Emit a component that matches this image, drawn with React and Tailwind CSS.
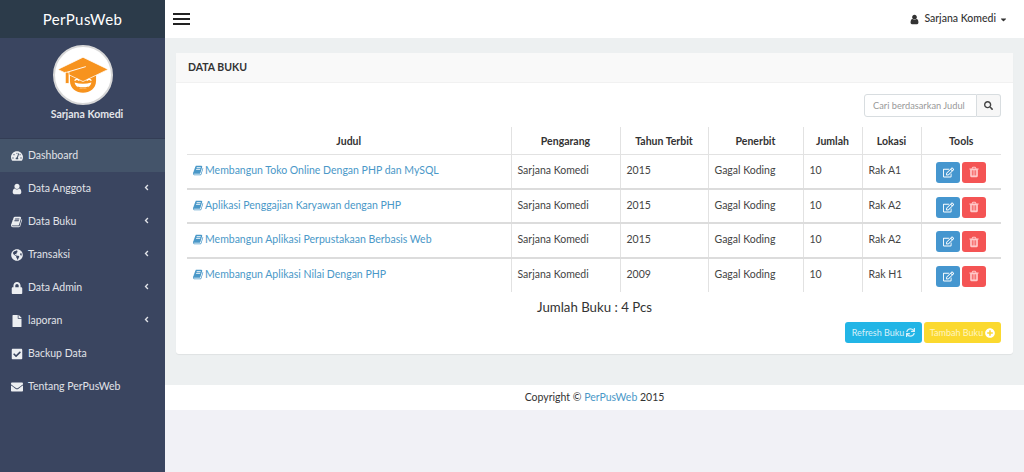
import React from 'react';
import { FaTachometerAlt, FaGlobeAmericas, FaLock, FaFile, FaCheckSquare, FaEnvelope, FaAngleLeft, FaSearch, FaRegEdit, FaSync, FaPlusCircle, FaCaretDown } from 'react-icons/fa';

// font awesome 4 shapes, the v5 set in react-icons draws these differently
function BookIcon({ className }) {
  return (
    <svg viewBox="0 0 1792 1792" fill="currentColor" className={className}>
      <path d="M1639 478q40 57 18 129l-275 906q-19 64-76.500 107.500t-122.500 43.500h-923q-77 0-148.500-53.500t-99.500-131.500q-24-67-2-127 0-4 3-27t4-37q1-8-3-21.500t-3-19.500q2-11 8-21t16.500-23.500 16.500-23.500q23-38 45-91.500t30-91.500q3-10 .5-30t-.5-28q3-11 17-28t17-23q21-36 42-92t25-90q1-9-2.500-32t.5-28q4-13 22-30.500t22-22.500q19-26 42.500-84.500t27.500-96.500q1-8-3-25.500t-2-26.500q2-8 9-18t18-23 17-21q8-12 16.500-30.500t15-35 16-36 19.500-32 26.500-23.500 36-11.500 47.500 5.500l-1 3q38-9 51-9h761q74 0 114 56t18 130l-274 906q-36 119-71.500 153.500t-128.500 34.500h-869q-27 0-38 15-11 16-1 43 24 70 144 70h923q29 0 56-15.500t35-41.500l300-987q7-22 5-57 38 15 59 43zm-1064 2q-4 13 2 22.500t20 9.500h608q13 0 25.500-9.500t16.500-22.500l21-64q4-13-2-22.500t-20-9.500h-608q-13 0-25.500 9.500t-16.500 22.500zm-83 256q-4 13 2 22.500t20 9.500h608q13 0 25.500-9.500t16.500-22.500l21-64q4-13-2-22.500t-20-9.500h-608q-13 0-25.500 9.500t-16.500 22.500z" />
    </svg>
  );
}

function UserIcon({ className }) {
  return (
    <svg viewBox="0 0 1792 1792" fill="currentColor" className={className}>
      <path d="M1536 1399q0 109-62.500 187t-150.500 78h-854q-88 0-150.500-78t-62.500-187q0-85 8.500-160.500t31.500-152 58.500-131 94-89 134.500-34.500q131 128 313 128t313-128q76 0 134.500 34.500t94 89 58.500 131 31.500 152 8.500 160.500zm-256-887q0 159-112.500 271.500t-271.500 112.500-271.500-112.500-112.500-271.500 112.500-271.500 271.500-112.500 271.500 112.500 112.500 271.500z" />
    </svg>
  );
}

function TrashIcon({ className }) {
  return (
    <svg viewBox="0 0 1792 1792" fill="currentColor" className={className}>
      <path d="M704 1376v-704q0-14-9-23t-23-9h-64q-14 0-23 9t-9 23v704q0 14 9 23t23 9h64q14 0 23-9t9-23zm256 0v-704q0-14-9-23t-23-9h-64q-14 0-23 9t-9 23v704q0 14 9 23t23 9h64q14 0 23-9t9-23zm256 0v-704q0-14-9-23t-23-9h-64q-14 0-23 9t-9 23v704q0 14 9 23t23 9h64q14 0 23-9t9-23zm-544-992h448l-48-117q-7-9-17-11h-317q-10 2-17 11zm928 32v64q0 14-9 23t-23 9h-96v948q0 83-47 143.500t-113 60.500h-832q-66 0-113-58.500t-47-141.500v-952h-96q-14 0-23-9t-9-23v-64q0-14 9-23t23-9h309l70-167q15-37 54-63t79-26h320q40 0 79 26t54 63l70 167h309q14 0 23 9t9 23z" />
    </svg>
  );
}

const menu = [
  { label: 'Dashboard', icon: FaTachometerAlt, active: true },
  { label: 'Data Anggota', icon: UserIcon, arrow: true },
  { label: 'Data Buku', icon: BookIcon, arrow: true },
  { label: 'Transaksi', icon: FaGlobeAmericas, arrow: true },
  { label: 'Data Admin', icon: FaLock, arrow: true },
  { label: 'laporan', icon: FaFile, arrow: true },
  { label: 'Backup Data', icon: FaCheckSquare },
  { label: 'Tentang PerPusWeb', icon: FaEnvelope },
];

const books = [
  { judul: 'Membangun Toko Online Dengan PHP dan MySQL', tahun: '2015', lokasi: 'Rak A1' },
  { judul: 'Aplikasi Penggajian Karyawan dengan PHP', tahun: '2015', lokasi: 'Rak A2' },
  { judul: 'Membangun Aplikasi Perpustakaan Berbasis Web', tahun: '2015', lokasi: 'Rak A2' },
  { judul: 'Membangun Aplikasi Nilai Dengan PHP', tahun: '2009', lokasi: 'Rak H1' },
];

function Avatar() {
  return (
    <div className="w-[60px] h-[60px] rounded-full bg-white border-2 border-[#d8d8d8]">
      <svg viewBox="0 0 60 60" className="w-full h-full">
        <path d="M16 28 H44 V36 C44 45 37 49 30 49 C23 49 16 45 16 36 Z" fill="#f7931e" />
        <path d="M3 24 L30 11 L57 24 L30 37 Z" fill="#f7931e" stroke="#fff" strokeWidth="0.8" />
        <path d="M13 27 L33 21" stroke="#fff" strokeWidth="1" fill="none" />
        <rect x="11" y="27" width="4" height="12" fill="#f7931e" stroke="#fff" strokeWidth="0.8" />
        <path d="M21 38 C23 47 37 47 39 38 Q30 41 21 38 Z" fill="#fff" />
        <path d="M24 43 Q30 45 36 43" stroke="#f7931e" strokeWidth="1.500" fill="none" />
        <path d="M21 36 q2.500 -3 5 0 M34 36 q2.500 -3 5 0" stroke="#fff" strokeWidth="1.500" fill="none" />
      </svg>
    </div>
  );
}

function Sidebar() {
  return (
    <aside className="w-[165px] shrink-0 bg-[#3a4560] min-h-screen">
      <div className="h-[38px] bg-[#2c3b4a] flex items-center justify-center text-white text-[15px] tracking-[0.4px]">PerPusWeb</div>
      <div className="h-[101px] flex flex-col items-center pt-[7px] border-b border-[#333d55]">
        <Avatar />
        <div className="pl-[9px] text-[10.5px] leading-[18px] font-bold text-[#e4e6ea]">Sarjana Komedi</div>
      </div>
      <nav>
        {menu.map((m) => (
          <div key={m.label} className={`h-[33px] flex items-center pl-[11px] pr-[14px] text-[10.5px] text-[#e1e3e8] ${m.active ? 'bg-[#44546a]' : ''}`}>
            <m.icon className="w-[12px] h-[12px] text-[#eceef1] mr-[5px] shrink-0" />
            <span>{m.label}</span>
            {m.arrow && <FaAngleLeft className="ml-auto w-[9px] h-[9px] mb-[3px]" />}
          </div>
        ))}
      </nav>
    </aside>
  );
}

function Topbar() {
  return (
    <header className="h-[38px] bg-white flex items-center justify-between pl-[8px] pr-[16px] text-[#333]">
      <div className="w-[17px] flex flex-col gap-[3px]">
        <span className="h-[2px] bg-[#222]" />
        <span className="h-[2px] bg-[#222]" />
        <span className="h-[2px] bg-[#222]" />
      </div>
      <div className="flex items-center text-[10.5px] font-medium">
        <UserIcon className="w-[11px] h-[11px] mr-[4px]" />
        <span>Sarjana Komedi</span>
        <FaCaretDown className="w-[9px] h-[9px] ml-[3px]" />
      </div>
    </header>
  );
}

function BookTable() {
  const th = 'border-l border-[#e2e2e2] pt-[3px] font-bold text-center text-[10.5px] text-[#333] border-b';
  const td = 'border-l border-[#e2e2e2] pl-[6px] align-top pt-[8px] text-[10.5px] text-[#444]';
  return (
    <table className="w-[814px] table-fixed border-collapse">
      <colgroup>
        <col className="w-[324px]" />
        <col className="w-[109px]" />
        <col className="w-[88px]" />
        <col className="w-[95px]" />
        <col className="w-[59px]" />
        <col className="w-[59px]" />
        <col className="w-[80px]" />
      </colgroup>
      <thead>
        <tr className="h-[27px]">
          <th className="pt-[3px] font-bold text-center text-[10.5px] text-[#333] border-b border-[#e2e2e2]">Judul</th>
          {['Pengarang', 'Tahun Terbit', 'Penerbit', 'Jumlah', 'Lokasi', 'Tools'].map((h) => (
            <th key={h} className={th}>{h}</th>
          ))}
        </tr>
      </thead>
      <tbody>
        {books.map((b, i) => (
          <tr key={b.judul} className={`h-[34.5px] ${i < 3 ? 'border-b-2 border-[#dcdcdc]' : ''}`}>
            <td className="pl-[6px] align-top pt-[8px] text-[10.5px] text-[#4a98c8]">
              <span className="inline-flex items-center">
                <BookIcon className="w-[11px] h-[11px] mr-[1px]" />
                {b.judul}
              </span>
            </td>
            <td className={td}>Sarjana Komedi</td>
            <td className={td}>{b.tahun}</td>
            <td className={td}>Gagal Koding</td>
            <td className={td}>10</td>
            <td className={td}>{b.lokasi}</td>
            <td className="border-l border-[#e2e2e2] align-top pt-[7px]">
              <div className="flex justify-center gap-[2px]">
                <button className="w-[24px] h-[21px] rounded-[3px] bg-[#4596cf] text-white flex items-center justify-center">
                  <FaRegEdit className="w-[11px] h-[11px]" />
                </button>
                <button className="w-[24px] h-[21px] rounded-[3px] bg-[#f45454] text-[#ffc9c9] flex items-center justify-center">
                  <TrashIcon className="w-[12px] h-[12px]" />
                </button>
              </div>
            </td>
          </tr>
        ))}
      </tbody>
    </table>
  );
}

function Panel() {
  return (
    <section className="bg-white rounded-[3px] shadow-[0_1px_1px_rgba(0,0,0,0.06)]">
      <div className="h-[30px] bg-[#f9f9f9] border-b border-[#f1f1f1] flex items-center pl-[12px] text-[10.5px] font-bold text-[#333]">DATA BUKU</div>
      <div className="pt-[11px] px-[11px] pb-[11px]">
        <div className="flex justify-end mr-[1px]">
          <div className="w-[113px] h-[23px] border border-[#d8dde0] rounded-l-[3px] pl-[8px] flex items-center text-[9.25px] text-[#999]">Cari berdasarkan Judul</div>
          <div className="w-[24px] h-[23px] border border-l-0 border-[#d8dde0] rounded-r-[3px] bg-[#f7f7f7] flex items-center justify-center">
            <FaSearch className="w-[9px] h-[9px] text-[#444]" />
          </div>
        </div>
        <div className="mt-[10px]">
          <BookTable />
        </div>
        <div className="text-center text-[13.25px] text-[#333] mt-[5px] leading-[20px]">Jumlah Buku : 4 Pcs</div>
        <div className="flex justify-end gap-[2px] mt-[5px] mr-[1px]">
          <button className="h-[21px] w-[77px] rounded-[3px] bg-[#22b5e6] text-[#d8f1fa] text-[9px] flex items-center justify-center gap-[2px]">
            Refresh Buku <FaSync className="w-[9px] h-[9px]" />
          </button>
          <button className="h-[21px] w-[77px] rounded-[3px] bg-[#fbd92f] text-[#fff5c2] text-[9px] flex items-center justify-center gap-[2px]">
            Tambah Buku <FaPlusCircle className="w-[10px] h-[10px] text-white" />
          </button>
        </div>
      </div>
    </section>
  );
}

export default function App() {
  return (
    <div className="flex min-h-screen bg-[#f1f1f6] font-['Lato','Liberation_Sans',sans-serif]">
      <Sidebar />
      <main className="flex-1 min-w-0">
        <Topbar />
        <div className="bg-[#edf0f1] px-[11px] pt-[15px] pb-[31px]">
          <Panel />
        </div>
        <footer className="h-[25px] bg-white flex items-center justify-center text-[10.5px] text-[#333]">
          Copyright ©&nbsp;<span className="text-[#4a98c8]">PerPusWeb</span>&nbsp;2015
        </footer>
      </main>
    </div>
  );
}
